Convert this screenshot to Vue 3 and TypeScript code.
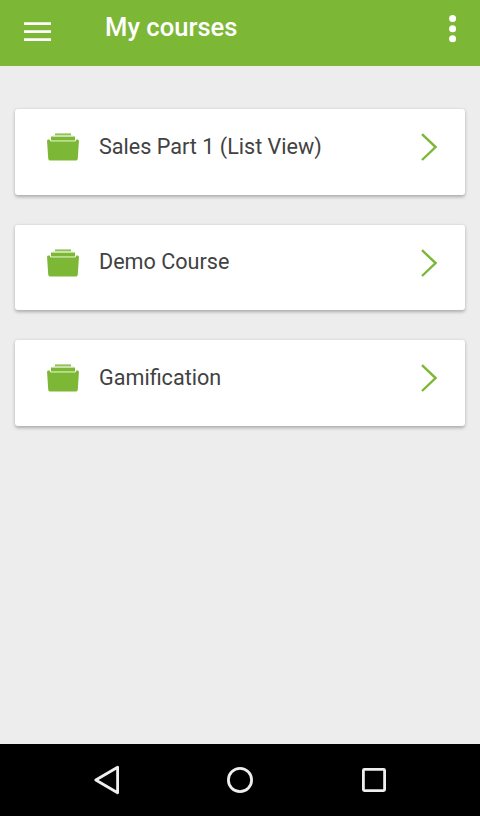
<script setup lang="ts">
interface Course {
  id: number
  title: string
}

const courses: Course[] = [
  { id: 1, title: 'Sales Part 1 (List View)' },
  { id: 2, title: 'Demo Course' },
  { id: 3, title: 'Gamification' },
]
</script>

<template>
  <div class="screen">
    <header class="bar">
      <button class="icon-button menu" aria-label="Menu">
        <svg width="27" height="20" viewBox="0 0 27 20">
          <path d="M0 1.6H27M0 9.6H27M0 17.6H27" stroke="#fff" stroke-width="2.9" />
        </svg>
      </button>
      <h1 class="title">My courses</h1>
      <button class="icon-button more" aria-label="More options">
        <svg width="8" height="28" viewBox="0 0 8 28" fill="#fff">
          <circle cx="3.6" cy="3.6" r="3.5" />
          <circle cx="3.6" cy="13.7" r="3.5" />
          <circle cx="3.6" cy="23.8" r="3.5" />
        </svg>
      </button>
    </header>

    <main class="list">
      <article v-for="course in courses" :key="course.id" class="card">
        <svg class="folder" width="32" height="28" viewBox="0 0 32 28">
          <rect x="4" y="3.5" width="24" height="6" fill="#7db736" />
          <rect x="8" y="0.4" width="16" height="2.2" fill="#7db736" opacity=".85" />
          <rect x="6" y="2.4" width="20" height="1.1" fill="#d3e8b9" />
          <path
            d="M1.2 6.5H2.6Q3.3 8.8 4.8 8.8H27.2Q28.7 8.8 29.4 6.5H30.8Q32.1 6.7 31.9 8.6L30.8 25.4Q30.6 27.6 28.6 27.6H3.4Q1.4 27.6 1.2 25.4L0.1 8.6Q-0.1 6.7 1.2 6.5Z"
            fill="#7db736"
          />
          <rect x="4" y="7" width="24" height="1.8" fill="#b9dc8e" />
        </svg>
        <span class="name">{{ course.title }}</span>
        <svg class="chevron" width="17" height="28" viewBox="0 0 17 28">
          <path d="M1 1.2L14.6 14.1L1 27" fill="none" stroke="#7db736" stroke-width="2.4" />
        </svg>
      </article>
    </main>

    <nav class="system">
      <svg width="26" height="30" viewBox="0 0 26 30">
        <path d="M1.8 15L23.6 2.2V27.8Z" fill="none" stroke="#eee" stroke-width="2.8" stroke-linejoin="round" />
      </svg>
      <svg class="home" width="26" height="26" viewBox="0 0 26 26">
        <circle cx="13" cy="13" r="11.6" fill="none" stroke="#eee" stroke-width="2.8" />
      </svg>
      <svg width="24" height="24" viewBox="0 0 24 24">
        <rect x="1.4" y="1.4" width="21.2" height="21.2" rx="1" fill="none" stroke="#eee" stroke-width="2.8" />
      </svg>
    </nav>
  </div>
</template>

<style>
body {
  margin: 0;
}
</style>

<style scoped>
.screen {
  display: flex;
  flex-direction: column;
  width: 480px;
  height: 816px;
  overflow: hidden;
  background: #ededed;
  font-family: Roboto, sans-serif;
}

.screen svg {
  display: block;
  flex: none;
}

.bar {
  display: flex;
  align-items: flex-start;
  box-sizing: border-box;
  height: 66px;
  padding: 0 23px 0 24px;
  background: #7db736;
}

.icon-button {
  padding: 0;
  border: 0;
  background: none;
}

.menu {
  margin-top: 22px;
}

.more {
  margin-top: 15px;
}

.title {
  flex: 1;
  margin: 12px 0 0 54px;
  color: #fff;
  font-size: 25.6px;
  font-weight: 500;
  line-height: 30px;
}

.list {
  display: flex;
  flex: 1;
  flex-direction: column;
  gap: 30px;
  padding: 43.2px 15px 0;
}

.card {
  display: flex;
  align-items: flex-start;
  box-sizing: border-box;
  height: 85.5px;
  padding: 23.95px 27px 0 32px;
  border-radius: 3px;
  background: #fff;
  box-shadow: 0 1.5px 3.5px rgba(0, 0, 0, 0.28);
}

.name {
  flex: 1;
  margin: 0.55px 0 0 20px;
  color: #424242;
  font-size: 21.6px;
  line-height: 26px;
}

.system {
  display: flex;
  align-items: center;
  justify-content: space-between;
  box-sizing: border-box;
  height: 72px;
  padding: 0 94px;
  background: #000;
}

.home {
  margin-right: 2px;
}
</style>
